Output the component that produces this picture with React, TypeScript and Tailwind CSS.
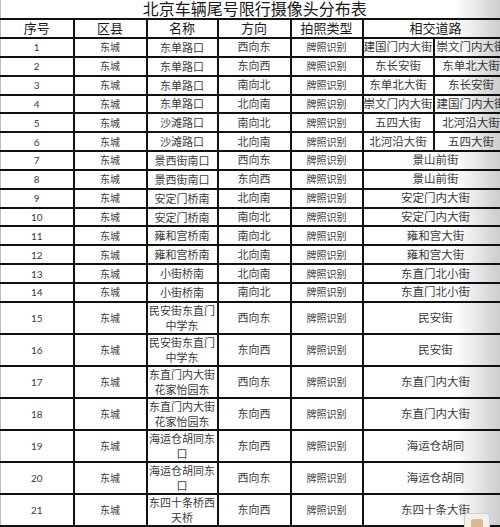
const font = "font-['Lato','Noto_Sans_CJK_SC',sans-serif]";

type Row = {
  no: number;
  name: string[];
  dir: string;
  roads: string[];
};

const rows: Row[] = [
  { no: 1, name: ["东单路口"], dir: "西向东", roads: ["建国门内大街", "崇文门内大街"] },
  { no: 2, name: ["东单路口"], dir: "东向西", roads: ["东长安街", "东单北大街"] },
  { no: 3, name: ["东单路口"], dir: "南向北", roads: ["东单北大街", "东长安街"] },
  { no: 4, name: ["东单路口"], dir: "北向南", roads: ["崇文门内大街", "建国门内大街"] },
  { no: 5, name: ["沙滩路口"], dir: "南向北", roads: ["五四大街", "北河沿大街"] },
  { no: 6, name: ["沙滩路口"], dir: "北向南", roads: ["北河沿大街", "五四大街"] },
  { no: 7, name: ["景西街南口"], dir: "西向东", roads: ["景山前街"] },
  { no: 8, name: ["景西街南口"], dir: "东向西", roads: ["景山前街"] },
  { no: 9, name: ["安定门桥南"], dir: "北向南", roads: ["安定门内大街"] },
  { no: 10, name: ["安定门桥南"], dir: "南向北", roads: ["安定门内大街"] },
  { no: 11, name: ["雍和宫桥南"], dir: "南向北", roads: ["雍和宫大街"] },
  { no: 12, name: ["雍和宫桥南"], dir: "北向南", roads: ["雍和宫大街"] },
  { no: 13, name: ["小街桥南"], dir: "北向南", roads: ["东直门北小街"] },
  { no: 14, name: ["小街桥南"], dir: "南向北", roads: ["东直门北小街"] },
  { no: 15, name: ["民安街东直门", "中学东"], dir: "西向东", roads: ["民安街"] },
  { no: 16, name: ["民安街东直门", "中学东"], dir: "东向西", roads: ["民安街"] },
  { no: 17, name: ["东直门内大街", "花家怡园东"], dir: "西向东", roads: ["东直门内大街"] },
  { no: 18, name: ["东直门内大街", "花家怡园东"], dir: "东向西", roads: ["东直门内大街"] },
  { no: 19, name: ["海运仓胡同东", "口"], dir: "东向西", roads: ["海运仓胡同"] },
  { no: 20, name: ["海运仓胡同东", "口"], dir: "西向东", roads: ["海运仓胡同"] },
  { no: 21, name: ["东四十条桥西", "天桥"], dir: "东向西", roads: ["东四十条大街"] },
];

const cell = "border-2 border-[#111] text-center align-middle p-0 whitespace-nowrap overflow-hidden";

export default function App() {
  return (
    <div className={`relative h-[527px] w-[500px] overflow-hidden bg-white ${font}`}>
      <table className="w-[508px] table-fixed border-collapse text-[#3a3a3a]">
        <colgroup>
          <col className="w-[73px]" />
          <col className="w-[73px]" />
          <col className="w-[71px]" />
          <col className="w-[73px]" />
          <col className="w-[72px]" />
          <col className="w-[71px]" />
          <col className="w-[75px]" />
        </colgroup>
        <tbody>
          <tr className="h-[18px]">
            <td
              colSpan={7}
              className="border-b-2 border-l border-b-[#111] border-l-[#bbb] p-0 text-center text-[16px] leading-[18px] text-[#1a1a1a]"
            >
              北京车辆尾号限行摄像头分布表
            </td>
          </tr>
          <tr className="h-[19px] text-[13px] leading-[17px] text-[#1a1a1a]">
            <td className={`${cell} border-l border-l-[#bbb]`}>序号</td>
            <td className={cell}>区县</td>
            <td className={cell}>名称</td>
            <td className={cell}>方向</td>
            <td className={cell}>拍照类型</td>
            <td colSpan={2} className={cell}>相交道路</td>
          </tr>
          {rows.map((r) => {
            const tall = r.name.length > 1;
            return (
              <tr key={r.no} className={tall ? "h-[32px]" : "h-[18.85px]"}>
                <td className={`${cell} border-l border-l-[#bbb] text-[10px] leading-[14px]`}>{r.no}</td>
                <td className={`${cell} text-[10px] leading-[14px]`}>东城</td>
                <td className={`${cell} text-[11px] leading-[15px]`}>
                  {r.name.map((n, i) => (
                    <div key={i}>{n}</div>
                  ))}
                </td>
                <td className={`${cell} text-[11px] leading-[14px]`}>{r.dir}</td>
                <td className={`${cell} text-[10px] leading-[14px]`}>牌照识别</td>
                {r.roads.length > 1 ? (
                  <>
                    <td className={`${cell} text-[11.5px] leading-[14px]`}>{r.roads[0]}</td>
                    <td className={`${cell} text-[11.5px] leading-[14px]`}>{r.roads[1]}</td>
                  </>
                ) : (
                  <td colSpan={2} className={`${cell} text-[11.5px] leading-[14px]`}>
                    {r.roads[0]}
                  </td>
                )}
              </tr>
            );
          })}
        </tbody>
      </table>

      <div className="pointer-events-none absolute right-0 top-0 h-full w-[45px] bg-linear-to-r from-transparent to-black/20" />

      <div className="absolute bottom-[-4px] right-[10px] flex h-[18px] w-[26px] items-end justify-center rounded-[3px] border border-[#cfcfcf] bg-[#f4f1ec]">
        <div className="h-[11px] w-[12px] rounded-t-[3px] bg-[#d9b98d]" />
      </div>
    </div>
  );
}
